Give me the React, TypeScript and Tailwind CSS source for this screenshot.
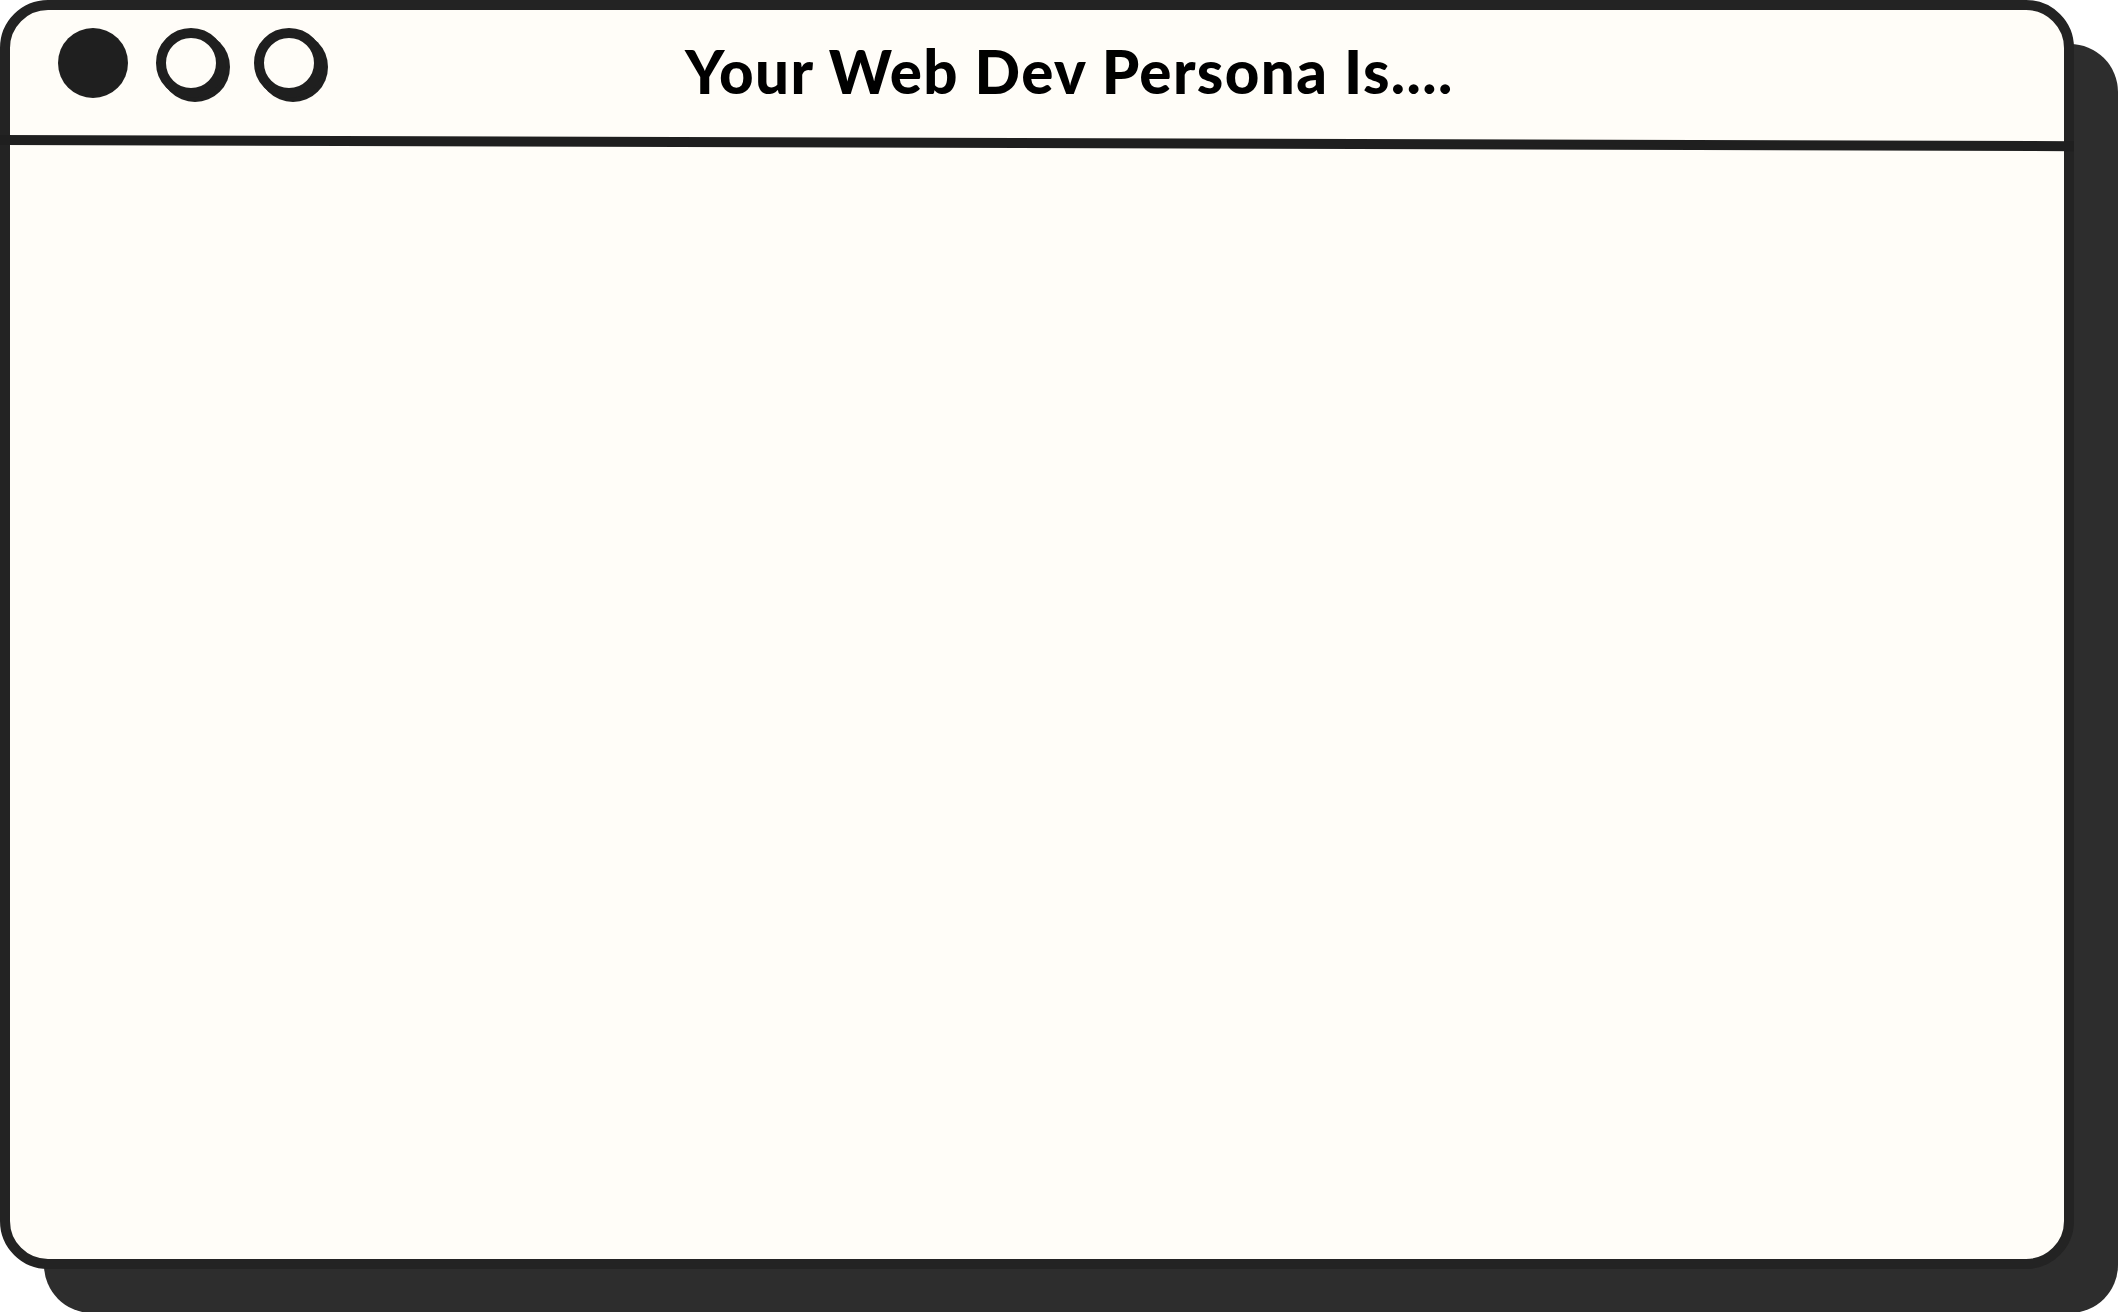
export default function App() {
  return (
    <div className="min-h-screen w-full bg-white">
      <div className="w-[2074px] h-[1269px] rounded-[48px] border-[10px] border-[#232323] bg-[#fffdf8] shadow-[44px_44px_0_0_#2d2d2d] flex flex-col">
        {/* Title bar */}
        <div className="h-[125px] flex items-start pt-[18px] pl-[48px]">
          <div className="flex items-center gap-[28px]">
            <div className="w-[70px] h-[70px] rounded-full bg-[#1f1f1f]" />
            <div className="w-[70px] h-[70px] rounded-full border-[10px] border-[#1f1f1f] bg-[#fffdf8] shadow-[4px_4px_0_0_#1f1f1f]" />
            <div className="w-[70px] h-[70px] rounded-full border-[10px] border-[#1f1f1f] bg-[#fffdf8] shadow-[4px_4px_0_0_#1f1f1f]" />
          </div>
          <h1 className="ml-[361px] mt-[7px] font-['Lato',sans-serif] font-black text-[60px] leading-[72px] tracking-[1.4px] text-black">
            Your Web Dev Persona Is....
          </h1>
        </div>
        <div className="-mx-[10px] h-[10px] bg-[#1f1f1f] origin-left rotate-[0.17deg]" />
        <div className="flex-1" />
      </div>
    </div>
  );
}
